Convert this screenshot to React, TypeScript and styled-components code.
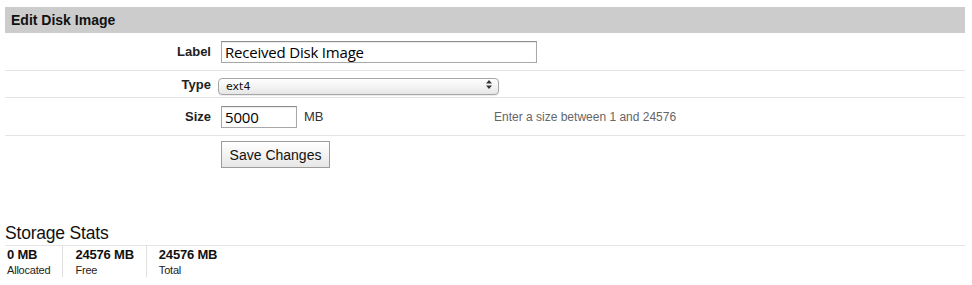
import React from "react";
import styled, { createGlobalStyle } from "styled-components";

const GlobalStyle = createGlobalStyle`
  html, body {
    margin: 0;
    padding: 0;
    background: #fff;
  }
  body {
    font-family: "Liberation Sans", Arial, sans-serif;
    color: #222;
  }
`;

const Page = styled.div`
  width: 960px;
  padding: 7px 7px 0 5px;
`;

const SectionHeader = styled.div`
  height: 26px;
  line-height: 27px;
  background: #cccccc;
  padding-left: 6px;
  font-size: 14px;
  font-weight: bold;
  color: #111;
`;

const FormRow = styled.div<{ $height: number; $last?: boolean }>`
  display: flex;
  align-items: center;
  height: ${props => props.$height}px;
  border-bottom: ${props => props.$last ? "none" : "1px solid #e4e4e4"};
`;

const FieldLabel = styled.label`
  flex: 0 0 206px;
  text-align: right;
  font-size: 13px;
  font-weight: bold;
  color: #222;
`;

const FieldCell = styled.div<{ $wide?: boolean }>`
  display: flex;
  align-items: center;
  margin-left: 10px;
  flex: ${props => props.$wide ? "1 1 auto" : "0 0 263px"};
`;

const TextInput = styled.input<{ $width: number }>`
  box-sizing: border-box;
  width: ${props => props.$width}px;
  height: 22px;
  border: 1px solid #a8a8a8;
  border-top-color: #8e8e8e;
  box-shadow: inset 0 1px 1px rgba(0, 0, 0, 0.08);
  padding: 0 3px;
  font-family: "Open Sans", "DejaVu Sans", sans-serif;
  font-size: 15px;
  letter-spacing: -0.2px;
  color: #000;
  outline: none;
`;

const SelectWrap = styled.div`
  position: relative;
  margin-left: -3px;
  width: 281px;
  height: 17px;
`;

const Select = styled.select`
  box-sizing: border-box;
  appearance: none;
  -webkit-appearance: none;
  width: 100%;
  height: 17px;
  margin: 0;
  padding: 0 0 0 7px;
  border: 1px solid #a6a6a6;
  border-radius: 4px;
  background: linear-gradient(#ffffff, #f1f1f1 60%, #e6e6e6);
  box-shadow: 0 1px 1px rgba(0, 0, 0, 0.08);
  font-family: "DejaVu Sans", "Liberation Sans", sans-serif;
  font-size: 11px;
  color: #111;
  outline: none;
`;

const SelectArrows = styled.svg`
  position: absolute;
  right: 7px;
  top: 4px;
  pointer-events: none;
`;

const Unit = styled.span`
  margin-left: 7px;
  font-size: 13px;
  color: #333;
`;

const Hint = styled.span`
  margin-left: 10px;
  font-size: 12px;
  color: #666;
`;

const ButtonRow = styled.div`
  padding: 5px 0 0 216px;
`;

const Button = styled.button`
  box-sizing: border-box;
  width: 109px;
  height: 27px;
  border: 1px solid #9b9b9b;
  border-radius: 0;
  background: linear-gradient(#ffffff, #f3f3f3 50%, #e7e7e7);
  font-family: "Liberation Sans", Arial, sans-serif;
  font-size: 14px;
  color: #111;
  padding: 0;
  cursor: pointer;
`;

const StatsTitle = styled.h2`
  margin: 54px 0 0 0;
  font-size: 17.5px;
  line-height: 23px;
  font-weight: normal;
  color: #111;
  letter-spacing: -0.2px;
`;

const StatsRow = styled.div`
  display: flex;
  border-top: 1px solid #e4e4e4;
`;

const StatCell = styled.div<{ $first?: boolean; $last?: boolean }>`
  padding: 1px 12px 0 ${props => props.$first ? "2px" : "12px"};
  border-right: ${props => props.$last ? "none" : "1px solid #e0e0e0"};
`;

const StatValue = styled.div`
  font-size: 13px;
  line-height: 15px;
  font-weight: bold;
  color: #111;
  letter-spacing: -0.2px;
`;

const StatLabel = styled.div`
  margin-top: 2px;
  font-size: 11px;
  line-height: 13px;
  color: #222;
  letter-spacing: -0.2px;
`;

const stats = [
  { value: "0 MB", label: "Allocated" },
  { value: "24576 MB", label: "Free" },
  { value: "24576 MB", label: "Total" },
];

export default function App() {
  return (
    <Page>
      <GlobalStyle />
      <SectionHeader>Edit Disk Image</SectionHeader>

      <FormRow $height={37}>
        <FieldLabel>Label</FieldLabel>
        <FieldCell $wide>
          <TextInput $width={316} defaultValue="Received Disk Image" />
        </FieldCell>
      </FormRow>

      <FormRow $height={26}>
        <FieldLabel>Type</FieldLabel>
        <FieldCell $wide>
          <SelectWrap>
            <Select defaultValue="ext4">
              <option value="ext4">ext4</option>
              <option value="ext3">ext3</option>
              <option value="swap">swap</option>
              <option value="raw">raw</option>
            </Select>
            <SelectArrows width="6" height="9" viewBox="0 0 6 9">
              <path d="M0 3.5 L3 0 L6 3.5 Z" fill="#333" />
              <path d="M0 5.5 L3 9 L6 5.5 Z" fill="#333" />
            </SelectArrows>
          </SelectWrap>
        </FieldCell>
      </FormRow>

      <FormRow $height={37}>
        <FieldLabel>Size</FieldLabel>
        <FieldCell>
          <TextInput $width={76} defaultValue="5000" />
          <Unit>MB</Unit>
        </FieldCell>
        <Hint>Enter a size between 1 and 24576</Hint>
      </FormRow>

      <ButtonRow>
        <Button>Save Changes</Button>
      </ButtonRow>

      <StatsTitle>Storage Stats</StatsTitle>
      <StatsRow>
        {stats.map((s, i) => (
          <StatCell key={s.label} $first={i === 0} $last={i === stats.length - 1}>
            <StatValue>{s.value}</StatValue>
            <StatLabel>{s.label}</StatLabel>
          </StatCell>
        ))}
      </StatsRow>
    </Page>
  );
}
